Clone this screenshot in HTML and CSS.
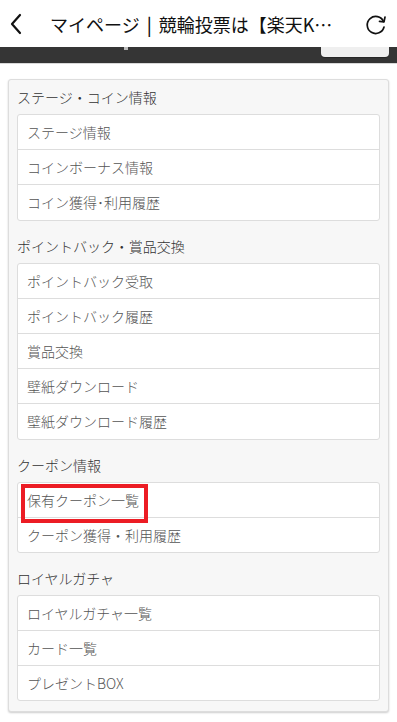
FILE: index.html
```html
<!DOCTYPE html>
<html lang="ja">
<head>
<meta charset="UTF-8">
<meta name="viewport" content="width=device-width, initial-scale=1.0">
<title>マイページ | 競輪投票は【楽天K】</title>
<link rel="stylesheet" href="styles.css">
</head>
<body>

<header class="topbar">
  <span class="back">
    <svg width="14" height="22" viewBox="0 0 14 22"><path d="M11 2 L3 11 L11 20" fill="none" stroke="#111" stroke-width="2.2" stroke-linecap="round" stroke-linejoin="round"/></svg>
  </span>
  <div class="title">マイページ<span class="sep">|</span>競輪投票は【楽天K…</div>
  <span class="reload">
    <svg width="24" height="24" viewBox="0 0 24 24"><path d="M19.5 9.5 A8.5 8.5 0 1 0 20 15" fill="none" stroke="#111" stroke-width="1.7" stroke-linecap="round"/><path d="M15.5 9.3 L20 9.8 L21 5" fill="none" stroke="#111" stroke-width="1.7" stroke-linecap="round" stroke-linejoin="round"/></svg>
  </span>
</header>

<div class="darkbar">
  <span class="cut">&nbsp;</span>
  <span class="tab"></span>
</div>

<main class="content">
  <div class="panel">

    <h4 class="sec-title">ステージ・コイン情報</h4>
    <ul class="list">
      <li>ステージ情報</li>
      <li>コインボーナス情報</li>
      <li>コイン獲得･利用履歴</li>
    </ul>

    <h4 class="sec-title">ポイントバック・賞品交換</h4>
    <ul class="list">
      <li>ポイントバック受取</li>
      <li>ポイントバック履歴</li>
      <li>賞品交換</li>
      <li>壁紙ダウンロード</li>
      <li>壁紙ダウンロード履歴</li>
    </ul>

    <h4 class="sec-title">クーポン情報</h4>
    <ul class="list">
      <li class="marked">保有クーポン一覧<span class="mark"></span></li>
      <li>クーポン獲得・利用履歴</li>
    </ul>

    <h4 class="sec-title">ロイヤルガチャ</h4>
    <ul class="list">
      <li>ロイヤルガチャ一覧</li>
      <li>カード一覧</li>
      <li>プレゼントBOX</li>
    </ul>

  </div>
</main>

</body>
</html>
```

FILE: styles.css
```css
*{box-sizing:border-box;}

body{
    margin:0;
    background:#fff;
    font-family:"Noto Sans CJK JP","Noto Sans",sans-serif;
    font-weight:300;
    color:#333;
}

/* Browser bar */
.topbar{
    height:47px;
    display:flex;
    align-items:center;
    background:#fff;
}

.back{
    width:50px;
    padding-left:9px;
    display:flex;
    align-items:center;
}

.title{
    flex:1;
    font-size:18px;
    font-weight:400;
    color:#111;
    white-space:nowrap;
    overflow:hidden;
}

.sep{
    margin:0 7px;
    font-weight:500;
}

.reload{
    width:50px;
    display:flex;
    justify-content:flex-end;
    padding-right:9px;
}

.darkbar{
    height:17px;
    background:#353535;
    display:flex;
    justify-content:space-between;
    align-items:flex-start;
    border-bottom:1px solid #d8d8d8;
}

.cut{
    margin-left:124px;
    width:4px;
    height:3px;
    background:#bbb;
}

.tab{
    width:68px;
    height:10px;
    margin-right:8px;
    background:#efefef;
    border-radius:0 0 4px 4px;
    box-shadow:0 1px 1px rgba(0,0,0,0.3);
}

/* Content */
.content{
    padding:15px 8px;
}

.panel{
    background:#f7f7f7;
    border:1px solid #ddd;
    border-radius:3px;
    padding:0 8px 2px;
    box-shadow:0 1px 2px rgba(0,0,0,0.2);
}

.sec-title{
    margin:0;
    padding:7px 0;
    font-size:14px;
    line-height:20px;
    font-weight:300;
    color:#333;
}

.list{
    list-style:none;
    margin:0 0 8px;
    padding:0;
    background:#fff;
    border:1px solid #ddd;
    border-radius:3px;
}

.list li{
    height:35.2px;
    padding:0 9px;
    display:flex;
    align-items:center;
    font-size:14px;
    color:#555;
    border-top:1px solid #ddd;
}

.list li:first-child{border-top:none;height:34.2px;}

.marked{position:relative;}

.mark{
    position:absolute;
    left:3px;
    top:1px;
    width:127px;
    height:39px;
    border:4px solid #ec1c24;
}
```
